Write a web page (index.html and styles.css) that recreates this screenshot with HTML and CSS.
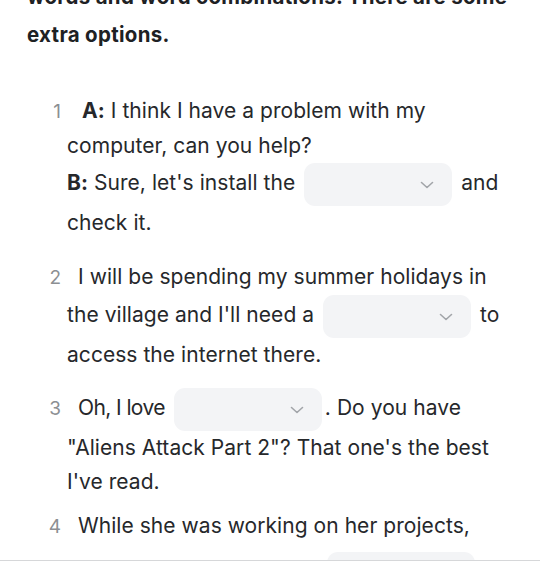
FILE: index.html
```html
<!DOCTYPE html>
<html lang="en">
<head>
<meta charset="utf-8">
<title>Exercise</title>
<link rel="stylesheet" href="styles.css">
</head>
<body>
<main class="page">
  <h2 class="task">Complete the sentences with the correct words and word combinations. There are some extra options.</h2>
  <ol class="items">
    <li class="item">
      <span class="num">1</span><b class="speaker first">A:</b> I think I have a problem with my computer, can you help?<br>
      <b class="speaker">B:</b> Sure, let's install the <span class="select"><svg class="chev" viewBox="0 0 14 8" width="14" height="8"><polyline points="1.5,1.5 7,6.5 12.5,1.5"/></svg></span> and check it.
    </li>
    <li class="item">
      <span class="num">2</span>I will be spending my summer holidays in the village and I'll need a <span class="select"><svg class="chev" viewBox="0 0 14 8" width="14" height="8"><polyline points="1.5,1.5 7,6.5 12.5,1.5"/></svg></span> to access the internet there.
    </li>
    <li class="item">
      <span class="num">3</span><span class="tight">Oh, I love</span> <span class="select"><svg class="chev" viewBox="0 0 14 8" width="14" height="8"><polyline points="1.5,1.5 7,6.5 12.5,1.5"/></svg></span>. Do you have "Aliens Attack Part 2"? That one's the best I've read.
    </li>
    <li class="item">
      <span class="num">4</span>While she was working on her projects, someone came over on a <span class="select select--low"><svg class="chev" viewBox="0 0 14 8" width="14" height="8"><polyline points="1.5,1.5 7,6.5 12.5,1.5"/></svg></span>.
    </li>
  </ol>
</main>
<footer class="bottom-bar"></footer>
</body>
</html>
```

FILE: styles.css
```css
html, body {
  margin: 0;
  padding: 0;
  background: #ffffff;
  overflow: hidden;
}

body {
  font-family: Inter, "Noto Sans", sans-serif;
  color: #26282b;
}

.page {
  padding: 0 27px;
  margin-top: -60px;
}

.task {
  margin: 0;
  font-size: 20.5px;
  line-height: 38px;
  font-weight: 700;
  color: #1e2124;
  letter-spacing: 0.3px;
}

.items {
  list-style: none;
  margin: 40px 0 0;
  padding: 0 0 0 40px;
}

.item {
  font-size: 21px;
  line-height: 34px;
  margin-bottom: 16px;
  text-indent: -22px;
  letter-spacing: 0.05px;
}

.item:first-child {
  margin-bottom: 20px;
}

.item:nth-child(3) {
  margin-bottom: 10px;
}

.num {
  display: inline-block;
  width: 16px;
  margin-right: 17px;
  text-indent: 0;
  text-align: right;
  color: #8c8f93;
  font-size: 19px;
  letter-spacing: 0;
}

.tight {
  letter-spacing: -0.6px;
}

.speaker {
  font-weight: 700;
}

.speaker.first {
  margin-left: 4px;
}

.select {
  display: inline-flex;
  align-items: center;
  justify-content: flex-end;
  box-sizing: border-box;
  width: 148px;
  height: 43px;
  padding-right: 18px;
  margin: 0 3px;
  vertical-align: middle;
  text-indent: 0;
  background: #f3f4f6;
  border-radius: 11px;
}

.select--low {
  margin-top: 8px;
}

.chev polyline {
  fill: none;
  stroke: #a2a5a9;
  stroke-width: 1.6;
  stroke-linecap: round;
  stroke-linejoin: round;
}

.bottom-bar {
  position: fixed;
  left: 0;
  right: 0;
  bottom: 0;
  height: 20px;
  background: #ffffff;
  border-top: 1px solid #d6d7d9;
}
```
